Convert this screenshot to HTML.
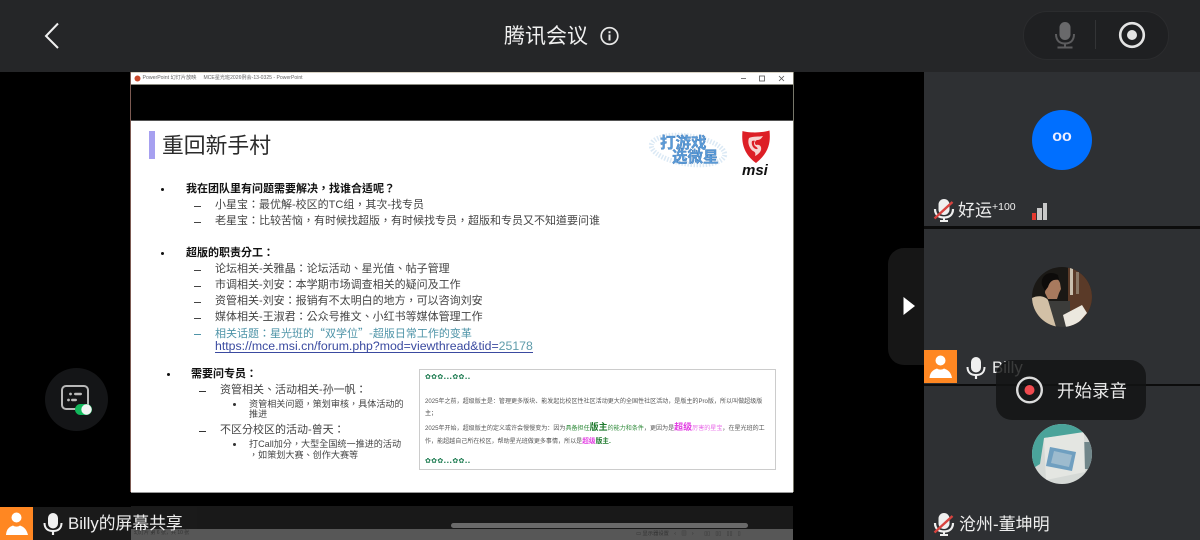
<!DOCTYPE html>
<html lang="zh"><head><meta charset="utf-8"><title>腾讯会议</title>
<style>
html,body{margin:0;padding:0;background:#000}
#p{position:relative;width:1200px;height:540px;overflow:hidden;background:#000;font-family:"Liberation Sans","Noto Sans CJK SC",sans-serif}
#p div,#p svg,#p a{position:absolute}
section{position:static;display:block}
.t{white-space:nowrap;line-height:1}
.s{color:#444;font-size:11px;font-family:"Liberation Sans","Noto Sans CJK TC",sans-serif}
.b{color:#111;font-size:11px;font-weight:bold;font-family:"Liberation Sans","Noto Sans CJK TC",sans-serif}
.m{color:#444;font-size:9.1px;font-family:"Liberation Sans","Noto Sans CJK TC",sans-serif}
.d{width:3px;height:3px;border-radius:50%;background:#111}
.n{width:6.500px;height:1px;background:#444}
.w{color:#f0f0f0}
.g{color:#555;font-size:6.050px}
.f{font-size:7px;color:#17784c;font-weight:bold;font-family:"DejaVu Sans",sans-serif;letter-spacing:.3px}
</style></head><body><div id="p">

<div style="left:0;top:0;width:1200px;height:72px;background:#252628"></div>
<svg style="left:44px;top:22px" width="16" height="28" viewBox="0 0 16 28"><path d="M14 1.500 L2 14 L14 26" fill="none" stroke="#f0f0f0" stroke-width="2"/></svg>
<div class="t w" style="left:504px;top:26px;font-size:21px">腾讯会议</div>
<svg style="left:600px;top:26px" width="19" height="20" viewBox="0 0 19 20"><circle cx="9.500" cy="10" r="8.300" fill="none" stroke="#e8e8e8" stroke-width="1.700"/><rect x="8.500" y="8.500" width="2" height="6" fill="#e8e8e8"/><rect x="8.500" y="5.200" width="2" height="2" fill="#e8e8e8"/></svg>

<div style="left:1023px;top:11px;width:144px;height:47px;border-radius:24px;background:#1f2022;border:1px solid #2b2c2e"></div>
<svg style="left:1054px;top:21px" width="22" height="28" viewBox="0 0 22 28"><rect x="5.500" y="1" width="11" height="18" rx="5.500" fill="#69696b"/><path d="M2 13 C2 20 6 22.500 11 22.500 C16 22.500 20 20 20 13" fill="none" stroke="#5c5c5e" stroke-width="2"/><path d="M11 22v4M3.500 26.500h15" stroke="#5c5c5e" stroke-width="2"/></svg>
<div style="left:1095px;top:20px;width:1px;height:29px;background:#333436"></div>
<svg style="left:1118px;top:21px" width="28" height="28" viewBox="0 0 28 28"><circle cx="14" cy="14" r="11.800" fill="none" stroke="#e4e4e4" stroke-width="2.600"/><circle cx="14" cy="14" r="5" fill="#e4e4e4"/></svg>

<!-- shared screen -->
<div style="left:130px;top:72px;width:664px;height:468px;background:#000"></div>
<div style="left:130px;top:72px;width:1px;height:420px;background:#7c5a52"></div>
<div style="left:793px;top:72px;width:1px;height:420px;background:#77776a"></div>
<div style="left:131px;top:72px;width:662px;height:13px;background:#fff;border-top:1px solid #d8d2c4;box-sizing:border-box;border-bottom:1px solid #8a8a80"></div>
<svg style="left:134px;top:75px" width="7" height="7" viewBox="0 0 7 7"><circle cx="3.500" cy="3.500" r="3" fill="#c9492c"/></svg>
<div class="t" style="left:142.500px;top:76px;font-size:5.200px;color:#666">PowerPoint 幻灯片放映</div>
<div class="t" style="left:203.500px;top:76px;font-size:5.100px;color:#666">MCE星光班2026例会-13-0325 - PowerPoint</div>
<svg style="left:740px;top:74px" width="48" height="9" viewBox="0 0 48 9"><path d="M1 4.500h5" stroke="#555" stroke-width=".8"/><rect x="19.500" y="2" width="5" height="5" fill="none" stroke="#555" stroke-width=".8"/><path d="M39 2l5 5M44 2l-5 5" stroke="#555" stroke-width=".8"/></svg>
<div style="left:131px;top:120px;width:662px;height:1px;background:#555"></div>

<div style="left:131px;top:121px;width:662px;height:372px;background:#fff"></div>
<div style="left:131px;top:492px;width:662px;height:1px;background:#999"></div>
<div style="left:149px;top:131px;width:5.500px;height:28px;background:#a6a0f0"></div>
<div class="t" style="left:162px;top:135px;font-size:21.800px;color:#2b2b2b">重回新手村</div>

<!-- logo -->
<svg style="left:645px;top:130px" width="88" height="42" viewBox="0 0 88 42"><ellipse cx="43" cy="20" rx="37" ry="14" fill="none" stroke="#dbe9f5" stroke-width="5" stroke-dasharray="1.500 1.500" transform="rotate(8 43 20)"/><text x="15" y="18" font-size="15.500" font-weight="bold" fill="#5a9bd8" stroke="#2f6cae" stroke-width=".3" font-family="Noto Sans CJK SC,sans-serif">打游戏</text><text x="27" y="32" font-size="15.500" font-weight="bold" fill="#5a9bd8" stroke="#2f6cae" stroke-width=".3" font-family="Noto Sans CJK SC,sans-serif">选微星</text></svg>
<svg style="left:741px;top:129px" width="30" height="36" viewBox="0 0 30 36"><path d="M1.500 2 C8 4 21 4 28.500 1.500 C29.500 12 29 23 15 34 C1.500 24 .5 12 1.500 2Z" fill="#dd1f26"/><path d="M8 9 C12 7 18 8 22 7 C20 10 19 11 16 11 C14 12 13 14 15 16 C18 15 21 17 20 21 C19 24 16 26 14 27 C15 24 14 23 12 22 C9 20 6 14 8 9Z" fill="#f7d5d2"/><path d="M11 12c1.500-.5 2.500-.5 3 0-1 1-1.500 3 0 5 1.500 1 3 2 2.500 3-2 .5-4-1-5-3-.8-1.700-1-3.500-.5-5z" fill="#dd1f26"/></svg>
<div class="t" style="left:742px;top:163px;font-size:15px;font-weight:bold;font-style:italic;color:#111">msi</div>

<!-- bullets -->
<section lang="zh-Hant">
<div class="d" style="left:161px;top:188px"></div>
<div class="t b" style="left:186px;top:184px">我在团队里有问题需要解决，找谁合适呢？</div>
<div class="n" style="left:194px;top:206px"></div>
<div class="t s" style="left:215px;top:200px">小星宝：最优解-校区的TC组，其次-找专员</div>
<div class="n" style="left:194px;top:222px"></div>
<div class="t s" style="left:215px;top:216px">老星宝：比较苦恼，有时候找超版，有时候找专员，超版和专员又不知道要问谁</div>

<div class="d" style="left:161px;top:252px"></div>
<div class="t b" style="left:186px;top:248px">超版的职责分工：</div>
<div class="n" style="left:194px;top:270px"></div>
<div class="t s" style="left:215px;top:264px">论坛相关-关雅晶：论坛活动、星光值、帖子管理</div>
<div class="n" style="left:194px;top:286px"></div>
<div class="t s" style="left:215px;top:280px">市调相关-刘安：本学期市场调查相关的疑问及工作</div>
<div class="n" style="left:194px;top:302px"></div>
<div class="t s" style="left:215px;top:296px">资管相关-刘安：报销有不太明白的地方，可以咨询刘安</div>
<div class="n" style="left:194px;top:318px"></div>
<div class="t s" style="left:215px;top:312px">媒体相关-王淑君：公众号推文、小红书等媒体管理工作</div>
<div class="n" style="left:194px;top:334px;background:#4f94a8"></div>
<div class="t s" style="left:215px;top:328px;color:#4f94a8;font-family:'Noto Sans CJK TC',sans-serif">相关话题：星光班的“双学位”-超版日常工作的变革</div>
<div class="t" style="left:215px;top:340px;font-size:12.300px;color:#3a4aa0;border-bottom:1px solid #3a4aa0">https://mce.msi.cn/forum.php?mod=viewthread&amp;tid=<span style="color:#5f9cab">25178</span></div>

<div class="d" style="left:167px;top:373px"></div>
<div class="t b" style="left:191px;top:369px">需要问专员：</div>
<div class="n" style="left:199px;top:391px;background:#333"></div>
<div class="t s" style="left:220px;top:385px">资管相关、活动相关-孙一帆：</div>
<div class="d" style="left:233px;top:403px;background:#333"></div>
<div class="t m" style="left:249px;top:400px">资管相关问题，策划审核，具体活动的</div>
<div class="t m" style="left:249px;top:410px">推进</div>
<div class="n" style="left:199px;top:431px;background:#333"></div>
<div class="t s" style="left:220px;top:425px">不区分校区的活动-曾天：</div>
<div class="d" style="left:233px;top:443px;background:#333"></div>
<div class="t m" style="left:249px;top:440px">打Call加分，大型全国统一推进的活动</div>
<div class="t m" style="left:249px;top:451px">，如策划大赛、创作大赛等</div>
</section>

<!-- quote box -->
<div style="left:419px;top:369px;width:357px;height:101px;border:1px solid #ccc;box-sizing:border-box"></div>
<div class="t f" style="left:425px;top:374px">✿✿✿...✿✿..</div>
<div class="t g" style="left:425px;top:399px">2025年之前，超级版主是：管理更多版块、能发起比校区性社区活动更大的全国性社区活动，是版主的Pro版，所以叫做超级版</div>
<div class="t g" style="left:425px;top:411px">主；</div>
<div class="t g" style="left:425px;top:420.500px;line-height:12px;height:12px">2025年开始，超级版主的定义或许会慢慢变为：因为<span style="color:#2f8a3a">具备担任</span><b style="color:#1f7a2e;font-size:9px">版主</b><span style="color:#2f8a3a">的能力和条件</span>，更因为是<b style="color:#e23ce2;font-size:9px">超级</b><span style="color:#e86ae8">厉害的星宝</span>，在星光班的工</div>
<div class="t g" style="left:425px;top:439px">作，能超越自己所在校区，帮助星光班做更多事情，所以是<b style="color:#e23ce2;font-size:6.700px">超级</b><b style="color:#1f7a2e;font-size:6.700px">版主.</b></div>
<div class="t f" style="left:425px;top:458px">✿✿✿...✿✿..</div>

<!-- ppt bottom -->
<div style="left:131px;top:506px;width:662px;height:23px;background:#191919"></div>
<div style="left:451px;top:523px;width:297px;height:5px;border-radius:3px;background:#6a6a6a"></div>
<div style="left:131px;top:529px;width:662px;height:11px;background:#575757"></div>
<div class="t" style="left:134px;top:531px;font-size:5px;color:#333">幻灯片 第 6 张，共 10 张</div>
<div class="t" style="left:636px;top:532px;font-size:5.300px;color:#333">▭ 显示器设置　‹　▥　›　　▯▯　▯▯　▯▯　▯</div>

<!-- left controls -->
<div style="left:45px;top:367.500px;width:63px;height:63px;border-radius:50%;background:#141517"></div>
<svg style="left:60px;top:384px" width="34" height="32" viewBox="0 0 34 32"><rect x="2" y="2" width="26" height="23" rx="4" fill="none" stroke="#b8b8b8" stroke-width="2"/><circle cx="10.500" cy="10" r="1.400" fill="#bbb"/><circle cx="8.500" cy="16" r="1.400" fill="#bbb"/><rect x="14" y="8.800" width="8" height="2.400" rx="1.200" fill="#bbb"/><rect x="11" y="14.800" width="6" height="2.400" rx="1.200" fill="#bbb"/><rect x="15" y="20" width="17" height="11" rx="5.500" fill="#12b85c"/><circle cx="26.500" cy="25.500" r="5.200" fill="#f4f4f4"/></svg>

<!-- share label -->
<div style="left:0;top:507px;width:131px;height:33px;background:#1a1a1a"></div>
<div style="left:131px;top:507px;width:66px;height:22px;background:#1a1a1a"></div>
<div style="left:0;top:507px;width:33px;height:33px;background:#ff8722"></div>
<svg style="left:5px;top:510px" width="24" height="28" viewBox="0 0 24 28"><circle cx="11.500" cy="7.500" r="5" fill="#fff"/><path d="M1 25 C1.500 19 4 17 8 15.500 C10 17 13 17 15 15.500 C19 17 21.500 19 23 25Z" fill="#fff"/></svg>
<svg style="left:43px;top:513px" width="20" height="22" viewBox="0 0 20 22"><rect x="5" y="0" width="10" height="15.500" rx="5" fill="#f0f0f0"/><path d="M1.500 10 C1.500 15.500 5 18 10 18 C15 18 18.500 15.500 18.500 10" fill="none" stroke="#f0f0f0" stroke-width="2"/><path d="M10 18v4" stroke="#f0f0f0" stroke-width="2.200"/></svg>
<div class="t" style="left:68px;top:516px;font-size:16.800px;color:#eee">Billy的屏幕共享</div>

<!-- right panel -->
<div style="left:924px;top:72px;width:276px;height:468px;background:#2e3033"></div>
<div style="left:924px;top:226px;width:276px;height:2.500px;background:#0c0c0c"></div>
<div style="left:924px;top:383.500px;width:276px;height:2px;background:#0c0c0c"></div>

<div style="left:1032px;top:110px;width:60px;height:60px;border-radius:50%;background:#006fff"></div>
<div class="t" style="left:1032px;top:129px;width:60px;text-align:center;font-size:16px;font-weight:bold;color:#eef">oo</div>
<svg style="left:933px;top:198px" width="22" height="24" viewBox="0 0 22 24"><rect x="5.500" y="1" width="11" height="16" rx="5.500" fill="#efefef"/><path d="M2 11 C2 17 6 19.500 11 19.500 C16 19.500 20 17 20 11" fill="none" stroke="#efefef" stroke-width="2.200"/><path d="M11 19v4M7 23h8" stroke="#efefef" stroke-width="2"/><path d="M1.500 20.500 L19.500 4" stroke="#d8433f" stroke-width="2.400"/></svg>
<div class="t" style="left:958px;top:202px;font-size:17px;color:#eee">好运<span style="font-size:10.500px;position:relative;top:-6px">+100</span></div>
<div style="left:1031.500px;top:212.500px;width:4px;height:7px;background:#e4392f"></div>
<div style="left:1037px;top:208px;width:4.500px;height:11.500px;background:#c8c8c8"></div>
<div style="left:1042.500px;top:203px;width:4.500px;height:16.500px;background:#c8c8c8"></div>

<svg style="left:1032px;top:267px" width="60" height="60" viewBox="0 0 60 60"><defs><clipPath id="c1"><circle cx="30" cy="30" r="30"/></clipPath></defs><g clip-path="url(#c1)"><rect width="60" height="60" fill="#1a1815"/><rect x="36" y="0" width="24" height="60" fill="#5a3a28"/><rect x="38" y="0" width="3" height="28" fill="#c9bfae"/><rect x="44" y="5" width="3" height="22" fill="#8a7866"/><rect x="14" y="34" width="24" height="26" fill="#3c3c3a"/><path d="M14 12 C18 8 26 10 28 16 L29 22 L27 26 L25 32 L16 32 L13 26Z" fill="#a87a5e"/><path d="M10 18 C8 8 18 3 26 8 L27 13 C21 12 18 14 16 20 L13 24Z" fill="#0d0b0a"/><path d="M0 31 C6 28 13 29 16 33 L24 60 L0 60Z" fill="#d2c0a6"/><path d="M31 48 L50 38 L55 46 L43 60 L34 60Z" fill="#ece8df"/></g></svg>

<!-- Billy tag -->
<div style="left:924px;top:350px;width:33px;height:33px;background:#ff8722"></div>
<svg style="left:929px;top:353px" width="24" height="28" viewBox="0 0 24 28"><circle cx="11.500" cy="7.500" r="5" fill="#fff"/><path d="M0.500 25 C1 19 4 17 8 15.500 C10 17 13 17 15 15.500 C19 17 22 19 23 25Z" fill="#fff"/></svg>
<svg style="left:966px;top:357px" width="20" height="22" viewBox="0 0 20 22"><rect x="5" y="0" width="10" height="15.500" rx="5" fill="#f0f0f0"/><path d="M1.500 10 C1.500 15.500 5 18 10 18 C15 18 18.500 15.500 18.500 10" fill="none" stroke="#f0f0f0" stroke-width="2"/><path d="M10 18v4" stroke="#f0f0f0" stroke-width="2.200"/></svg>
<div class="t" style="left:992px;top:360px;font-size:16.800px;color:#eee">Billy</div>

<!-- handle -->
<div style="left:888px;top:248px;width:36px;height:117px;background:#161616;border-radius:16px 0 0 16px"></div>
<svg style="left:902px;top:296px" width="14" height="20" viewBox="0 0 14 20"><path d="M1.500 1 L13 10 L1.500 19Z" fill="#fff"/></svg>

<!-- record -->
<div style="left:996px;top:360px;width:150px;height:60px;border-radius:16px;background:rgba(18,19,20,.82)"></div>
<svg style="left:1015px;top:375px" width="30" height="30" viewBox="0 0 30 30"><circle cx="14.500" cy="15" r="12.300" fill="none" stroke="#dcdcdc" stroke-width="2.400"/><circle cx="14.500" cy="15" r="5" fill="#f04a4f"/></svg>
<div class="t" style="left:1057px;top:383px;font-size:17.500px;color:#e8e8e8">开始录音</div>

<!-- third -->
<svg style="left:1032px;top:424px" width="60" height="60" viewBox="0 0 60 60"><defs><clipPath id="c2"><circle cx="30" cy="30" r="30"/></clipPath></defs><g clip-path="url(#c2)"><rect width="60" height="60" fill="#d5d9d6"/><path d="M0 0H60V8L12 14 L8 40 L0 45Z" fill="#4aa39a"/><path d="M52 18H60V45H52Z" fill="#70868a"/><path d="M12 14 L52 8 L53 48 L14 56 Z" fill="#e4e6e2"/><path d="M18 23 L44 28 L40 47 L14 42Z" fill="#6f9fc0"/><path d="M22 27 L40 31 L37 43 L19 39Z" fill="#9dbbce"/></g></svg>
<svg style="left:933px;top:512px" width="22" height="24" viewBox="0 0 22 24"><rect x="5.500" y="1" width="11" height="16" rx="5.500" fill="#efefef"/><path d="M2 11 C2 17 6 19.500 11 19.500 C16 19.500 20 17 20 11" fill="none" stroke="#efefef" stroke-width="2.200"/><path d="M11 19v4M7 23h8" stroke="#efefef" stroke-width="2"/><path d="M1.500 20.500 L19.500 4" stroke="#d8433f" stroke-width="2.400"/></svg>
<div class="t" style="left:959px;top:516px;font-size:17px;color:#eee">沧州-董坤明</div>

</div></body></html>
